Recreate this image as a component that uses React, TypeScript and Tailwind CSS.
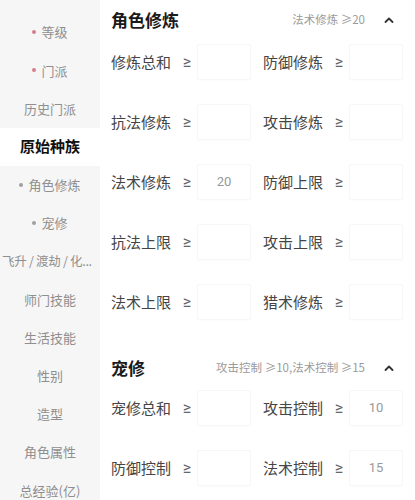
import React from 'react';

type NavItem = {
  label: string;
  dot?: 'pink' | 'gray';
  active?: boolean;
  left?: boolean;
};

type Field = {
  label: string;
  value?: string;
};

const navItems: NavItem[] = [
  { label: '等级', dot: 'pink' },
  { label: '门派', dot: 'pink' },
  { label: '历史门派' },
  { label: '原始种族', active: true },
  { label: '角色修炼', dot: 'gray' },
  { label: '宠修', dot: 'gray' },
  { label: '飞升 / 渡劫 / 化...', left: true },
  { label: '师门技能' },
  { label: '生活技能' },
  { label: '性别' },
  { label: '造型' },
  { label: '角色属性' },
  { label: '总经验(亿)' }
];

const roleFields: Field[] = [
  { label: '修炼总和' },
  { label: '防御修炼' },
  { label: '抗法修炼' },
  { label: '攻击修炼' },
  { label: '法术修炼', value: '20' },
  { label: '防御上限' },
  { label: '抗法上限' },
  { label: '攻击上限' },
  { label: '法术上限' },
  { label: '猎术修炼' }
];

const petFields: Field[] = [
  { label: '宠修总和' },
  { label: '攻击控制', value: '10' },
  { label: '防御控制' },
  { label: '法术控制', value: '15' }
];

// ≥ looks wrong in the CJK face, take it from a latin one
const latin = { fontFamily: 'Roboto, "Noto Sans", sans-serif' };

const ChevronUp = () => (
  <svg width="12" height="12" viewBox="0 0 12 12" fill="none">
    <path d="M2.5 8 L6 4.5 L9.5 8" stroke="#333" strokeWidth="1.8" strokeLinecap="round" strokeLinejoin="round" />
  </svg>
);

const FieldCell = ({ label, value }: Field) => (
  <div className="flex items-center">
    <span className="w-[70px] text-[15px] text-[#454545] whitespace-nowrap">{label}</span>
    <span className="w-[12px] text-center text-[16px] text-[#666]" style={latin}>
      ≥
    </span>
    <div
      className="ml-[4px] flex h-[36px] w-[54px] items-center justify-center rounded-[2px] border border-[#f7f7f7] bg-white text-[13px] text-[#999] shadow-[0_1px_2px_rgba(0,0,0,0.02)]"
      style={latin}
    >
      {value}
    </div>
  </div>
);

const SectionHeader = ({ title, summary }: { title: string; summary: string }) => (
  <div className="flex h-full items-center justify-between pr-[20px]">
    <span className="text-[17px] font-bold text-[#1a1a1a]">{title}</span>
    <div className="flex items-center">
      <span className="text-[11.5px] text-[#9a9a9a]">{summary}</span>
      <span className="ml-[18px]">
        <ChevronUp />
      </span>
    </div>
  </div>
);

export default function App() {
  return (
    <div
      className="flex h-[500px] w-[415px] overflow-hidden bg-white"
      style={{ fontFamily: '"Noto Sans CJK SC", "Noto Sans", sans-serif' }}
    >
      <aside className="w-[100px] shrink-0 bg-[#f6f6f6] pt-[13px]">
        {navItems.map(item => (
          <div
            key={item.label}
            className={
              item.active
                ? 'flex h-[38.2px] items-center justify-center bg-white text-[15px] font-bold text-[#111]'
                : item.left
                ? 'flex h-[38.2px] items-center justify-start pl-[2px] text-[12.5px] text-[#8f8f8f] whitespace-nowrap tracking-[-0.3px]'
                : 'flex h-[38.2px] items-center justify-center text-[13px] text-[#8f8f8f]'
            }
          >
            {item.dot && (
              <span
                className={
                  item.dot === 'pink'
                    ? 'mr-[5px] h-[4px] w-[4px] rounded-full bg-[#d47f8c]'
                    : 'mr-[5px] h-[4px] w-[4px] rounded-full bg-[#a0a0a0]'
                }
              />
            )}
            {item.label}
          </div>
        ))}
      </aside>

      <main className="flex-1 pl-[11px]">
        <div className="h-[32px] pt-[8px]">
          <SectionHeader title="角色修炼" summary="法术修炼 ≥20" />
        </div>
        <div className="grid grid-cols-2">
          {roleFields.map(f => (
            <div key={f.label} className="flex h-[60px] items-center">
              <FieldCell {...f} />
            </div>
          ))}
        </div>

        <div className="h-[46px] pt-[26px]">
          <SectionHeader title="宠修" summary="攻击控制 ≥10,法术控制 ≥15" />
        </div>
        <div className="grid grid-cols-2">
          {petFields.map(f => (
            <div key={f.label} className="flex h-[60px] items-center">
              <FieldCell {...f} />
            </div>
          ))}
        </div>
      </main>
    </div>
  );
}
